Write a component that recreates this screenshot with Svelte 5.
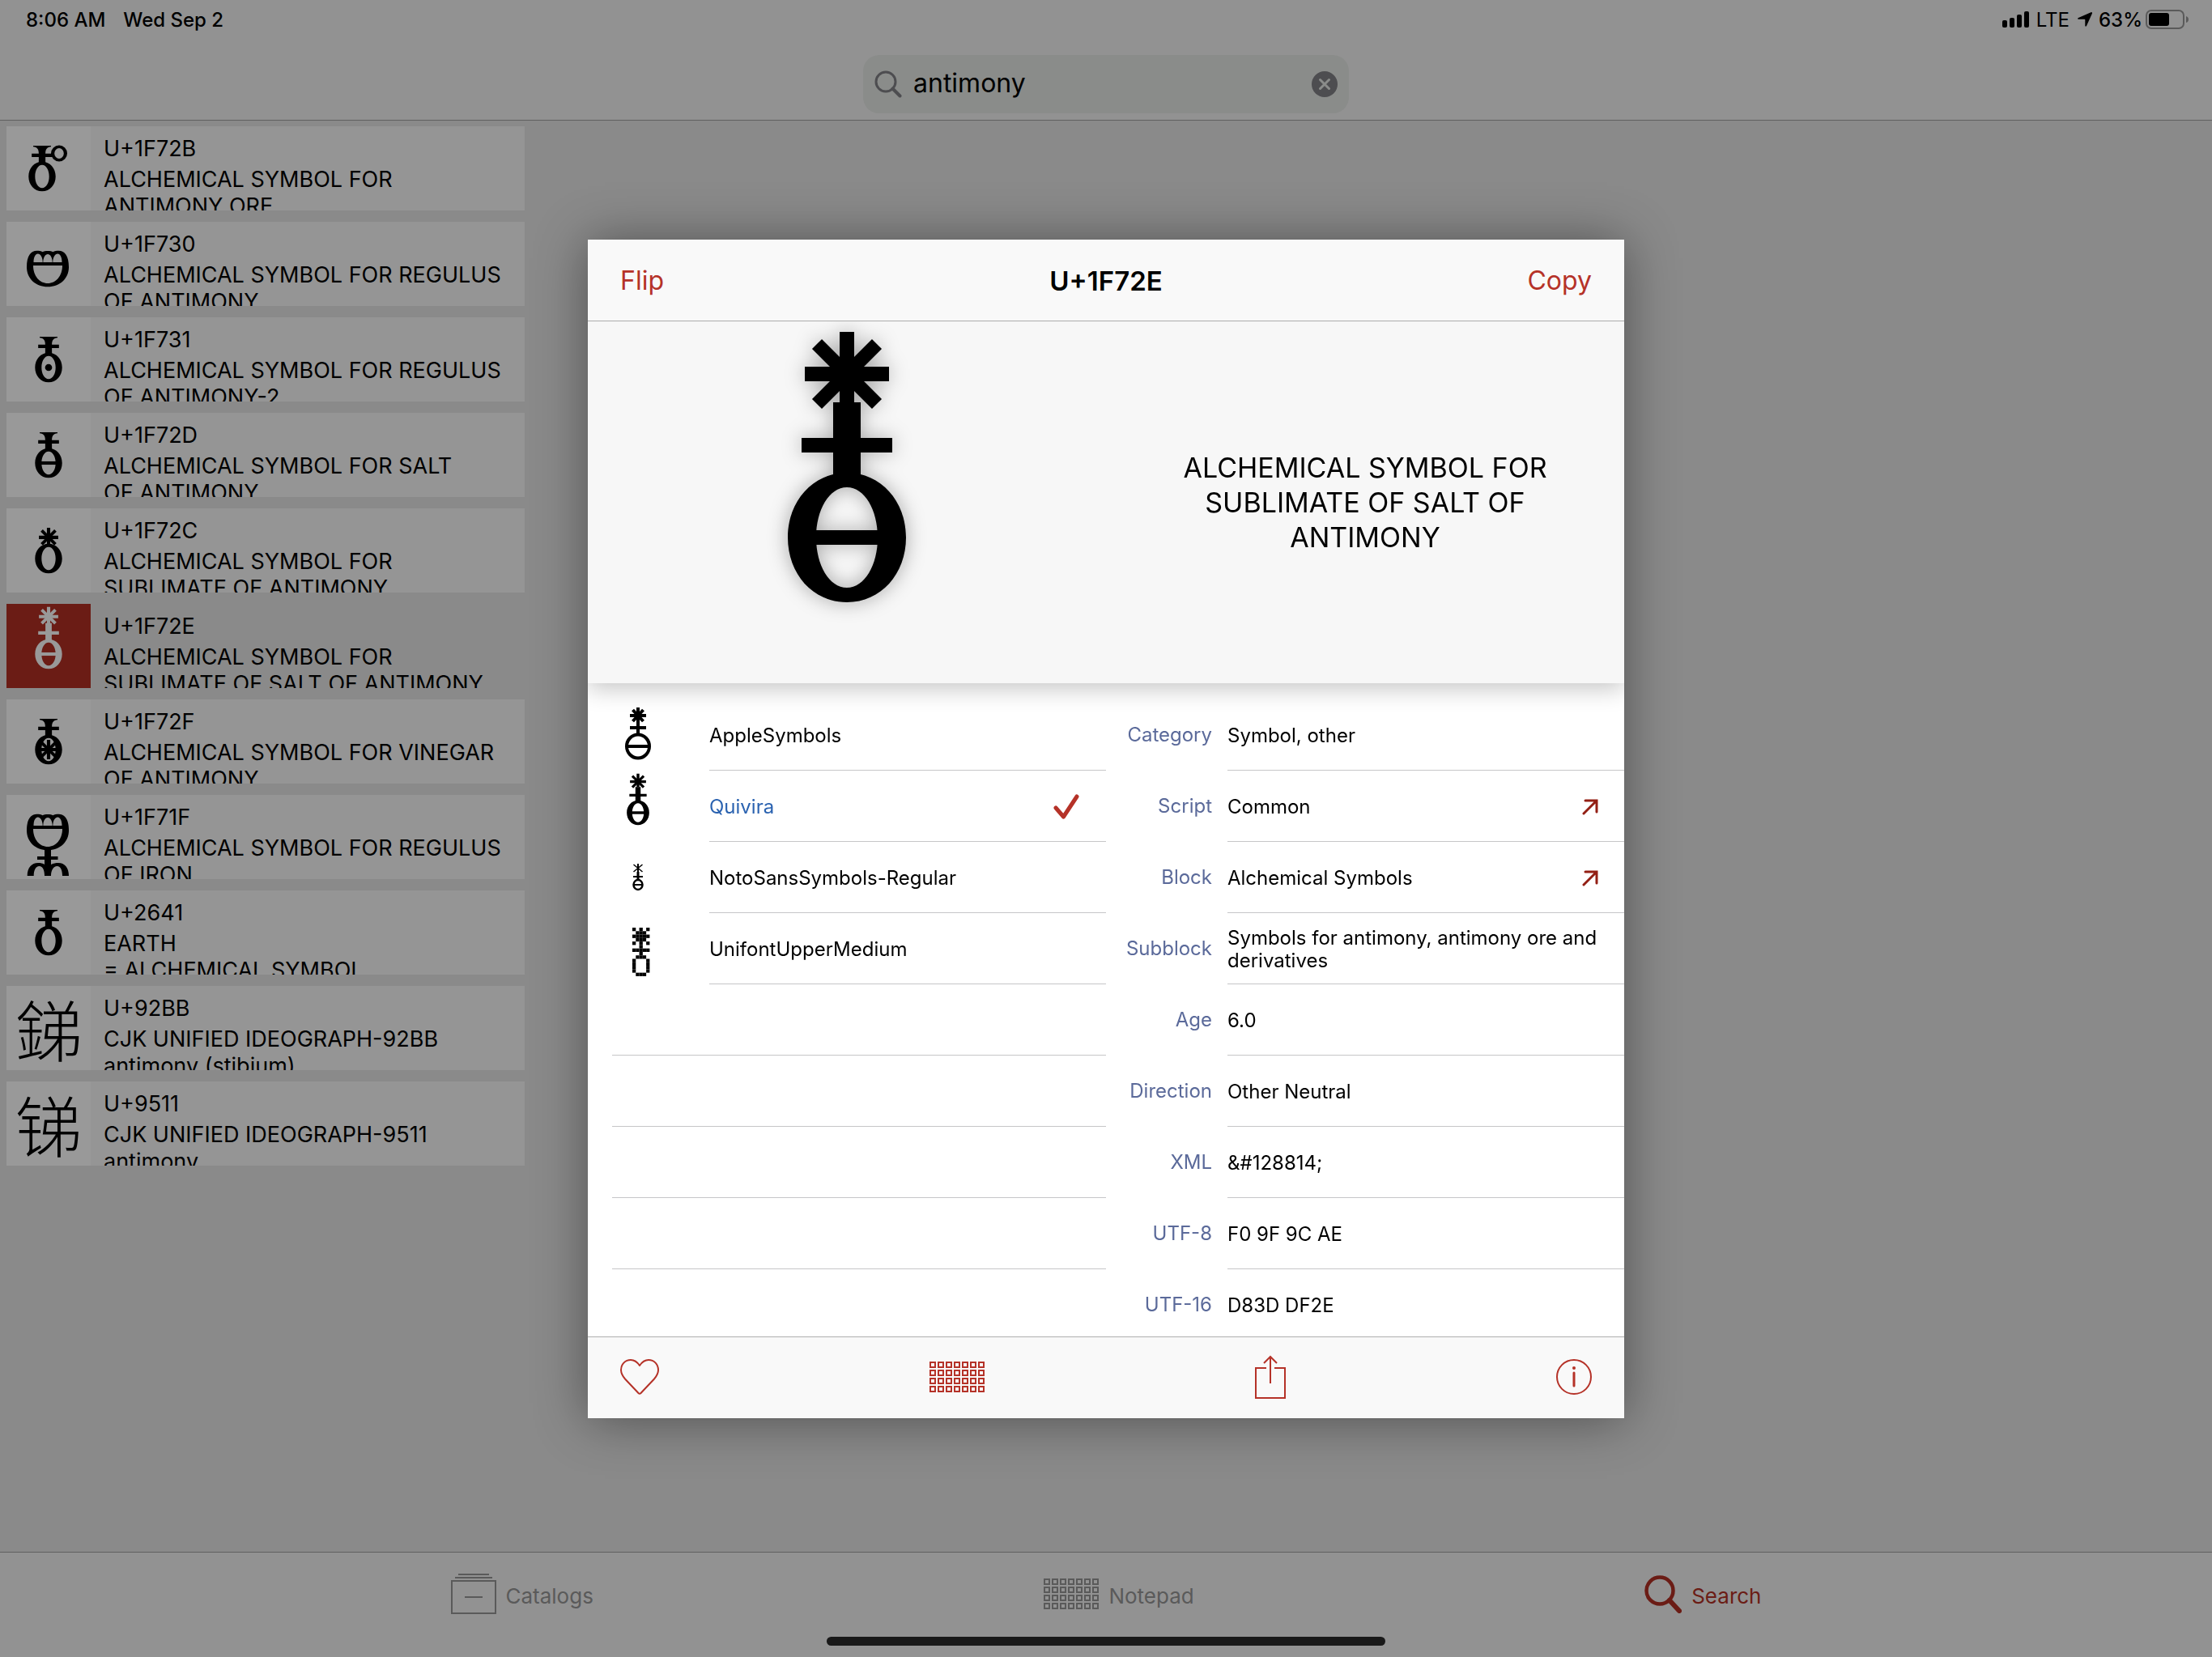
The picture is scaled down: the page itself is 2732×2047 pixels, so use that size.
<script>
  const results = [
    { code: 'U+1F72B', lines: ['ALCHEMICAL SYMBOL FOR', 'ANTIMONY ORE'], glyph: 'ore' },
    { code: 'U+1F730', lines: ['ALCHEMICAL SYMBOL FOR REGULUS', 'OF ANTIMONY'], glyph: 'bowl' },
    { code: 'U+1F731', lines: ['ALCHEMICAL SYMBOL FOR REGULUS', 'OF ANTIMONY-2'], glyph: 'dot' },
    { code: 'U+1F72D', lines: ['ALCHEMICAL SYMBOL FOR SALT', 'OF ANTIMONY'], glyph: 'salt' },
    { code: 'U+1F72C', lines: ['ALCHEMICAL SYMBOL FOR', 'SUBLIMATE OF ANTIMONY'], glyph: 'sublimate' },
    { code: 'U+1F72E', lines: ['ALCHEMICAL SYMBOL FOR', 'SUBLIMATE OF SALT OF ANTIMONY'], glyph: 'sublimateSalt' },
    { code: 'U+1F72F', lines: ['ALCHEMICAL SYMBOL FOR VINEGAR', 'OF ANTIMONY'], glyph: 'vinegar' },
    { code: 'U+1F71F', lines: ['ALCHEMICAL SYMBOL FOR REGULUS', 'OF IRON'], glyph: 'iron' },
    { code: 'U+2641', lines: ['EARTH', '= ALCHEMICAL SYMBOL'], glyph: 'earth' },
    { code: 'U+92BB', lines: ['CJK UNIFIED IDEOGRAPH-92BB', 'antimony (stibium)'], char: '銻' },
    { code: 'U+9511', lines: ['CJK UNIFIED IDEOGRAPH-9511', 'antimony'], char: '锑' }
  ];

  const fonts = ['AppleSymbols', 'Quivira', 'NotoSansSymbols-Regular', 'UnifontUpperMedium'];
  const emptyRows = [1, 2, 3, 4, 5];

  const properties = [
    { label: 'Category', value: 'Symbol, other' },
    { label: 'Script', value: 'Common', link: true },
    { label: 'Block', value: 'Alchemical Symbols', link: true },
    { label: 'Subblock', value: 'Symbols for antimony, antimony ore and derivatives' },
    { label: 'Age', value: '6.0' },
    { label: 'Direction', value: 'Other Neutral' },
    { label: 'XML', value: '&#128814;' },
    { label: 'UTF-8', value: 'F0 9F 9C AE' },
    { label: 'UTF-16', value: 'D83D DF2E' }
  ];

  const bitmap = [
    'X.X.X', '.XXX.', 'XXXXX', '.XXX.', 'X.X.X', '..X..', 'XXXXX',
    '..X..', '.XXX.', 'X...X', 'X...X', 'X...X', 'X...X', '.XXX.'
  ];
  const pixels = bitmap.flatMap((row, y) =>
    [...row].map((c, x) => ({ x, y, on: c === 'X' })).filter((p) => p.on)
  );

  let selected = $state('U+1F72E');
  let activeFont = $state('Quivira');
  let query = $state('antimony');
</script>

{#snippet oval()}
  <path fill-rule="evenodd" d="M0-80C42-80 73-45 73 0S42 80 0 80S-73 45-73 0S-42-80 0-80ZM0-62C-22-62-38-34-38 0S-22 62 0 62S38 34 38 0S22-62 0-62Z" />
{/snippet}

{#snippet star(y, foot)}
  <g transform="translate(0 {y})">
    <path d="M-9-52H9V{foot}H-9ZM-52-9H52V9H-52Z" />
    <path d="M-37-37L37 37M37-37L-37 37" stroke="currentColor" stroke-width="17" />
  </g>
{/snippet}

{#snippet neck()}
  <path d="M-48-166H48V-160C26-158 18-146 18-123H56V-105H18V-70H-18V-105H-56V-123H-18C-18-146-26-158-48-160Z" />
{/snippet}

{#snippet bar()}
  <path d="M-45-9H45V9H-45Z" />
{/snippet}

{#snippet sublimateSalt()}
  {@render star(-202, 36)}
  <path d="M-17-167H17V-123H56V-105H17V-70H-17V-105H-56V-123H-17Z" />
  {@render oval()}
  {@render bar()}
{/snippet}

{#snippet bowl()}
  <path fill-rule="evenodd" d="M25 56C25 42 30 35.700 37.500 35.700C40 35.700 43 36 44.500 37.300C47 35.700 55 35.700 57.500 37.300C59 36 62 35.700 64.500 35.700C72 35.700 77 42 77 56C77 70 66 80.300 51 80.300C36 80.300 25 70 25 56ZM33 54C33 67 41 76 51 76S69 67 69 54ZM33.500 50H44.700C44.700 44 42 39.500 38.800 39.500S33.500 44 33.500 50ZM45.300 50H56.700C56.700 44 54 40 51 40S45.300 44 45.300 50ZM57.300 50H68.500C68.500 44 66.400 39.500 63.200 39.500S57.300 44 57.300 50Z" />
{/snippet}

{#snippet glyph(kind)}
  <svg class="glyph" viewBox="0 0 104 104" fill="currentColor" aria-hidden="true">
    {#if kind === 'bowl'}
      {@render bowl()}
    {:else if kind === 'iron'}
      <g transform="translate(0 -12)">{@render bowl()}</g>
      <path d="M47 66H55V76H63.500V80H55V86C58 84.500 61 84 64 84C72 84 77 90 77 100H69C69 93 67 88 62.500 88S55 93 55 100H47C47 93 45 88 40.500 88S33.700 93 33.700 100H25.700C25.700 90 31 84 39 84C42 84 45 84.500 47 86V80H38V76H47Z" />
    {:else}
      <g transform="translate({kind === 'ore' ? 44 : 52} 62) scale(0.229)">
        {#if kind === 'sublimateSalt'}
          {@render sublimateSalt()}
        {:else}
          {@render oval()}
          {#if kind === 'sublimate'}{@render star(-114, 40)}{:else}{@render neck()}{/if}
          {#if kind === 'salt'}{@render bar()}{/if}
          {#if kind === 'dot'}<circle r="19" />{/if}
          {#if kind === 'vinegar'}{@render star(0, 52)}{/if}
        {/if}
      </g>
      {#if kind === 'ore'}
        <path fill-rule="evenodd" d="M65 23.500A10 10 0 1 1 65 43.500A10 10 0 1 1 65 23.500ZM65 27A5.800 6.500 0 1 0 65 40A5.800 6.500 0 1 0 65 27Z" />
      {/if}
    {/if}
  </svg>
{/snippet}

{#snippet grid()}
  <svg width="68" height="38" viewBox="0 0 68 38" fill="none" stroke="currentColor" stroke-width="2" aria-hidden="true">
    {#each [0, 1, 2, 3] as row}
      {#each [0, 1, 2, 3, 4, 5, 6] as col}
        <rect x={col * 10 + 1} y={row * 10 + 1} width="6" height="6" />
      {/each}
    {/each}
  </svg>
{/snippet}

<div class="app">
  <header class="top">
    <div class="status">
      <div class="status-group">
        <span>8:06 AM</span>
        <span>Wed Sep 2</span>
      </div>
      <div class="status-icons">
        <svg width="34" height="20" viewBox="0 0 34 20" fill="currentColor" aria-hidden="true">
          <rect x="0" y="11" width="6" height="9" rx="2" />
          <rect x="9" y="8" width="6" height="12" rx="2" />
          <rect x="18" y="4" width="6" height="16" rx="2" />
          <rect x="27" y="0" width="6" height="20" rx="2" />
        </svg>
        <span class="carrier">LTE</span>
        <svg class="location" width="18" height="18" viewBox="0 0 18 18" fill="currentColor" aria-hidden="true">
          <path d="M17 0Q18.500 0 18 1.500L11 17Q10 18.500 9.300 17V9.500Q9.300 8.700 8.500 8.700H1Q-.8 8 1 7Z" />
        </svg>
        <span>63%</span>
        <svg class="battery" width="54" height="24" viewBox="0 0 54 24" aria-hidden="true">
          <rect x="1" y="1" width="46" height="22" rx="6" fill="none" stroke="#5a5a5a" stroke-width="2" />
          <rect x="4" y="4" width="25" height="16" rx="3" fill="#000" />
          <path d="M50 8Q53 9 53 12T50 16Z" fill="#5a5a5a" />
        </svg>
      </div>
    </div>
    <form class="search" onsubmit={(e) => e.preventDefault()}>
      <svg width="34" height="34" viewBox="0 0 34 34" fill="none" stroke="currentColor" aria-hidden="true">
        <circle cx="14" cy="14" r="12" stroke-width="3" />
        <path d="M22.500 22.500L31.500 31.500" stroke-width="4" stroke-linecap="round" />
      </svg>
      <input type="text" aria-label="Search characters" bind:value={query} />
      <button type="button" aria-label="Clear search" onclick={() => (query = '')}>
        <svg width="32" height="32" viewBox="0 0 32 32" aria-hidden="true">
          <circle cx="16" cy="16" r="16" fill="currentColor" />
          <path d="M10.500 10.500L21.500 21.500M21.500 10.500L10.500 21.500" stroke="#8a8c8a" stroke-width="3" stroke-linecap="round" />
        </svg>
      </button>
    </form>
  </header>

  <main>
    <ul class="results">
      {#each results as item}
        <li>
          <button class="card" class:selected={item.code === selected} onclick={() => (selected = item.code)}>
            <span class="thumb">
              {#if item.char}<span class="ideograph">{item.char}</span>{:else}{@render glyph(item.glyph)}{/if}
            </span>
            <span class="card-text">
              <span class="code">{item.code}</span>
              {#each item.lines as line}<span class="name">{line}</span>{/each}
            </span>
          </button>
        </li>
      {/each}
    </ul>
  </main>

  <footer>
    <nav class="tabs">
      <button class="tab">
        <svg width="56" height="50" viewBox="0 0 56 50" fill="none" stroke="currentColor" stroke-width="2" aria-hidden="true">
          <path d="M9 1H47M5 5H51M1 9H55V49H1ZM17 29H39" />
        </svg>
        <span>Catalogs</span>
      </button>
      <button class="tab">
        {@render grid()}
        <span>Notepad</span>
      </button>
      <button class="tab active">
        <svg width="46" height="48" viewBox="0 0 46 48" fill="none" stroke="currentColor" aria-hidden="true">
          <circle cx="19" cy="20" r="16.500" stroke-width="4.500" />
          <path d="M31 32L43 45" stroke-width="6" stroke-linecap="round" />
        </svg>
        <span>Search</span>
      </button>
    </nav>
    <div class="home"></div>
  </footer>
</div>

<div class="overlay">
  <div class="modal" role="dialog" aria-labelledby="char-title">
    <div class="modal-head">
      <button>Flip</button>
      <h1 id="char-title">U+1F72E</h1>
      <button>Copy</button>
    </div>

    <div class="hero">
      <svg class="hero-glyph" width="148" height="336" viewBox="-74 -255 148 336" fill="currentColor" aria-hidden="true">
        {@render sublimateSalt()}
      </svg>
      <p>ALCHEMICAL SYMBOL FOR SUBLIMATE OF SALT OF ANTIMONY</p>
    </div>

    <div class="details">
      <ul class="fonts">
        {#each fonts as font, i}
          <li>
            <svg width="64" height="88" viewBox="0 0 64 88" fill="currentColor" aria-hidden="true">
              {#if i === 0}
                <path d="M30 10H34V42H30ZM22 18H42V22H22ZM22 33H42V37H22ZM18 56H46V60H18Z" />
                <path d="M25.500 13L38.500 27M38.500 13L25.500 27" stroke="currentColor" stroke-width="4" />
                <ellipse cx="32" cy="58" rx="14" ry="14.500" fill="none" stroke="currentColor" stroke-width="4" />
              {:else if i === 1}
                <g transform="translate(32 52) scale(0.19)">{@render sublimateSalt()}</g>
              {:else if i === 2}
                <path d="M31 27H33V38H31ZM30.500 37H33.500V48H30.500ZM26 42H38V44H26ZM26 52H38V54H26Z" />
                <path d="M26.500 28L37.500 37M37.500 28L26.500 37" stroke="currentColor" stroke-width="1.500" />
                <ellipse cx="32" cy="53" rx="5.500" ry="6" fill="none" stroke="currentColor" stroke-width="2.500" />
              {:else}
                <g transform="translate(25 18) scale(4.280)">
                  {#each pixels as p}<rect x={p.x} y={p.y} width="1" height="1" />{/each}
                </g>
              {/if}
            </svg>
            <button class="font" class:active={font === activeFont} onclick={() => (activeFont = font)}>
              <span>{font}</span>
              {#if font === activeFont}
                <svg width="32" height="32" viewBox="0 0 32 32" fill="none" stroke="#b53228" stroke-width="5" stroke-linecap="round" stroke-linejoin="round" aria-hidden="true">
                  <path d="M3 17L12.500 28L29 3" />
                </svg>
              {/if}
            </button>
          </li>
        {/each}
        {#each emptyRows as _}<li class="empty"></li>{/each}
      </ul>

      <dl class="properties">
        {#each properties as prop}
          <div class="property">
            <dt>{prop.label}</dt>
            <dd>
              <span>{prop.value}</span>
              {#if prop.link}
                <button aria-label="Open {prop.value}">
                  <svg width="20" height="20" viewBox="0 0 20 20" fill="none" stroke="currentColor" stroke-width="3" stroke-linecap="round" aria-hidden="true">
                    <path d="M2 18L18 2M4 2H18V16" />
                  </svg>
                </button>
              {/if}
            </dd>
          </div>
        {/each}
      </dl>
    </div>

    <div class="toolbar">
      <button aria-label="Add to favourites">
        <svg width="48" height="44" viewBox="0 0 48 44" fill="none" stroke="currentColor" stroke-width="2" stroke-linejoin="round" aria-hidden="true">
          <path d="M24 8C21 3.500 17.500 1 13 1C6 1 1 6.500 1 13.500C1 18 3 21 6 24.500L22.500 42Q24 43.500 25.500 42L42 24.500C45 21 47 18 47 13.500C47 6.500 42 1 35 1C30.500 1 27 3.500 24 8Z" />
        </svg>
      </button>
      <button aria-label="Add to notepad">{@render grid()}</button>
      <button aria-label="Share">
        <svg width="38" height="54" viewBox="0 0 38 54" fill="none" stroke="currentColor" stroke-width="2" aria-hidden="true">
          <path d="M14 16H1V53H37V16H24M19 2V35M11 10L19 2L27 10" />
        </svg>
      </button>
      <button aria-label="Info">
        <svg width="44" height="44" viewBox="0 0 44 44" fill="none" stroke="currentColor" aria-hidden="true">
          <circle cx="22" cy="22" r="21" stroke-width="2" />
          <circle cx="22" cy="11" r="2" fill="currentColor" stroke="none" />
          <path d="M22 17V33" stroke-width="3" stroke-linecap="round" />
        </svg>
      </button>
    </div>
  </div>
</div>

<style>
  :global(body) {
    background: #8a8a8a;
  }

  .app,
  .overlay {
    font-family: Inter, 'Liberation Sans', sans-serif;
    color: #000;
  }

  button {
    display: flex;
    align-items: center;
    padding: 0;
    border: 0;
    background: none;
    color: inherit;
    font: inherit;
    text-align: left;
    cursor: pointer;
  }

  svg {
    display: block;
    flex: none;
  }

  ul,
  dl,
  dd,
  p,
  h1 {
    margin: 0;
    padding: 0;
    list-style: none;
  }

  .app {
    display: flex;
    flex-direction: column;
    min-height: 100vh;
    background: #8a8a8a;
  }

  .top {
    display: flex;
    flex-direction: column;
    align-items: center;
    gap: 20px;
    padding-bottom: 8px;
    background: #929292;
    border-bottom: 1px solid #606060;
  }

  .status {
    box-sizing: border-box;
    display: flex;
    justify-content: space-between;
    align-items: center;
    width: 100%;
    height: 48px;
    padding: 0 28px 0 32px;
    font-size: 24px;
    font-weight: 500;
  }

  .status-group {
    display: flex;
    gap: 22px;
  }

  .status-icons {
    display: flex;
    align-items: center;
  }

  .carrier {
    margin: 0 10px 0 8px;
    font-weight: 400;
  }

  .location {
    margin-right: 8px;
  }

  .battery {
    margin-left: 4px;
  }

  .search {
    box-sizing: border-box;
    display: flex;
    align-items: center;
    gap: 14px;
    width: 600px;
    max-width: 100%;
    height: 72px;
    padding: 0 14px;
    border-radius: 20px;
    background: #8a8c8a;
    color: #4d4d50;
  }

  .search input {
    flex: 1;
    min-width: 0;
    padding: 0 0 4px;
    border: 0;
    outline: 0;
    background: none;
    color: #000;
    font: 32px Inter, 'Liberation Sans', sans-serif;
  }

  main {
    flex: 1;
    padding: 7px 8px;
  }

  .results {
    display: flex;
    flex-direction: column;
    gap: 14px;
    max-width: 640px;
  }

  .card {
    width: 100%;
    height: 104px;
    overflow: hidden;
    background: #959595;
    font-size: 27px;
  }

  .thumb {
    display: flex;
    flex: none;
    align-items: center;
    justify-content: center;
    width: 104px;
    height: 104px;
    background: #999;
  }

  .glyph {
    width: 104px;
    height: 104px;
  }

  .ideograph {
    font-family: 'Noto Sans CJK SC', sans-serif;
    font-size: 82px;
    font-weight: 300;
    line-height: 104px;
  }

  .card-text {
    display: flex;
    flex-direction: column;
    align-self: flex-start;
    padding: 11px 0 0 16px;
    line-height: 33px;
    white-space: nowrap;
  }

  .code {
    margin-bottom: 5px;
  }

  .selected {
    background: none;
  }

  .selected .thumb {
    background: #6b1c15;
    color: #999;
  }

  footer {
    box-sizing: border-box;
    display: flex;
    flex-direction: column;
    align-items: center;
    justify-content: space-between;
    height: 130px;
    padding: 26px 0 14px;
    border-top: 1px solid #606060;
    background: #929292;
  }

  .tabs {
    display: flex;
    justify-content: space-evenly;
    width: 100%;
    height: 50px;
  }

  .tab {
    gap: 12px;
    color: #5a5a5a;
    font-size: 26px;
  }

  .tab span {
    padding-top: 4px;
  }

  .tab.active {
    color: #6b1c15;
  }

  .home {
    width: 690px;
    max-width: 80%;
    height: 11px;
    border-radius: 6px;
    background: #191919;
  }

  .overlay {
    position: fixed;
    inset: 0;
    display: flex;
    align-items: center;
    justify-content: center;
  }

  .modal {
    display: flex;
    flex-direction: column;
    width: 1280px;
    max-width: 92%;
    height: 1456px;
    max-height: 92%;
    background: #fff;
    box-shadow: 0 2px 60px rgba(0, 0, 0, 0.42);
  }

  .modal-head {
    position: relative;
    z-index: 2;
    box-sizing: border-box;
    display: grid;
    flex: none;
    grid-template-columns: 1fr auto 1fr;
    align-items: center;
    height: 101px;
    padding: 2px 40px 0;
    border-bottom: 1px solid #acacac;
    background: #f9f9f9;
    font-size: 32px;
  }

  .modal-head button {
    justify-self: start;
    color: #b53228;
  }

  .modal-head button:last-child {
    justify-self: end;
  }

  .modal-head h1 {
    font-size: 33px;
    font-weight: 600;
  }

  .hero {
    position: relative;
    z-index: 1;
    display: grid;
    flex: none;
    grid-template-columns: 1fr 1fr;
    justify-items: center;
    height: 447px;
    background: #f7f7f7;
    box-shadow: 0 6px 28px rgba(0, 0, 0, 0.24);
    clip-path: inset(0 0 -40px 0);
  }

  .hero-glyph {
    margin-top: 12px;
    overflow: visible;
    filter: drop-shadow(0 0 12px rgba(0, 0, 0, 0.32));
  }

  .hero p {
    align-self: center;
    max-width: 500px;
    font-size: 34px;
    line-height: 43px;
    text-align: center;
  }

  .details {
    display: grid;
    flex: 1;
    grid-template-columns: 1fr 1fr;
    align-items: start;
    min-height: 0;
    padding-top: 20px;
    overflow: hidden;
    font-size: 24px;
    line-height: 28px;
  }

  .fonts {
    padding-left: 30px;
  }

  .fonts li {
    display: flex;
    gap: 56px;
    height: 88px;
  }

  .font {
    flex: 1;
    justify-content: space-between;
    padding: 3px 33px 0 0;
    border-bottom: 1px solid #c6c6c8;
  }

  .font.active {
    color: #2a62b0;
  }

  .fonts .empty {
    box-sizing: border-box;
    border-bottom: 1px solid #c6c6c8;
  }

  .property {
    display: grid;
    grid-template-columns: 131px 1fr;
    column-gap: 19px;
    height: 88px;
  }

  dt {
    align-self: center;
    color: #5b6a9a;
    text-align: right;
  }

  dd {
    display: flex;
    align-items: center;
    justify-content: space-between;
    padding: 3px 32px 0 0;
    border-bottom: 1px solid #c6c6c8;
  }

  dd button {
    color: #931f14;
  }

  .toolbar {
    box-sizing: border-box;
    display: flex;
    flex: none;
    align-items: center;
    justify-content: space-between;
    height: 101px;
    padding: 0 40px 2px;
    border-top: 1px solid #b0b0b0;
    background: #f9f9f9;
    color: #b53228;
  }
</style>
